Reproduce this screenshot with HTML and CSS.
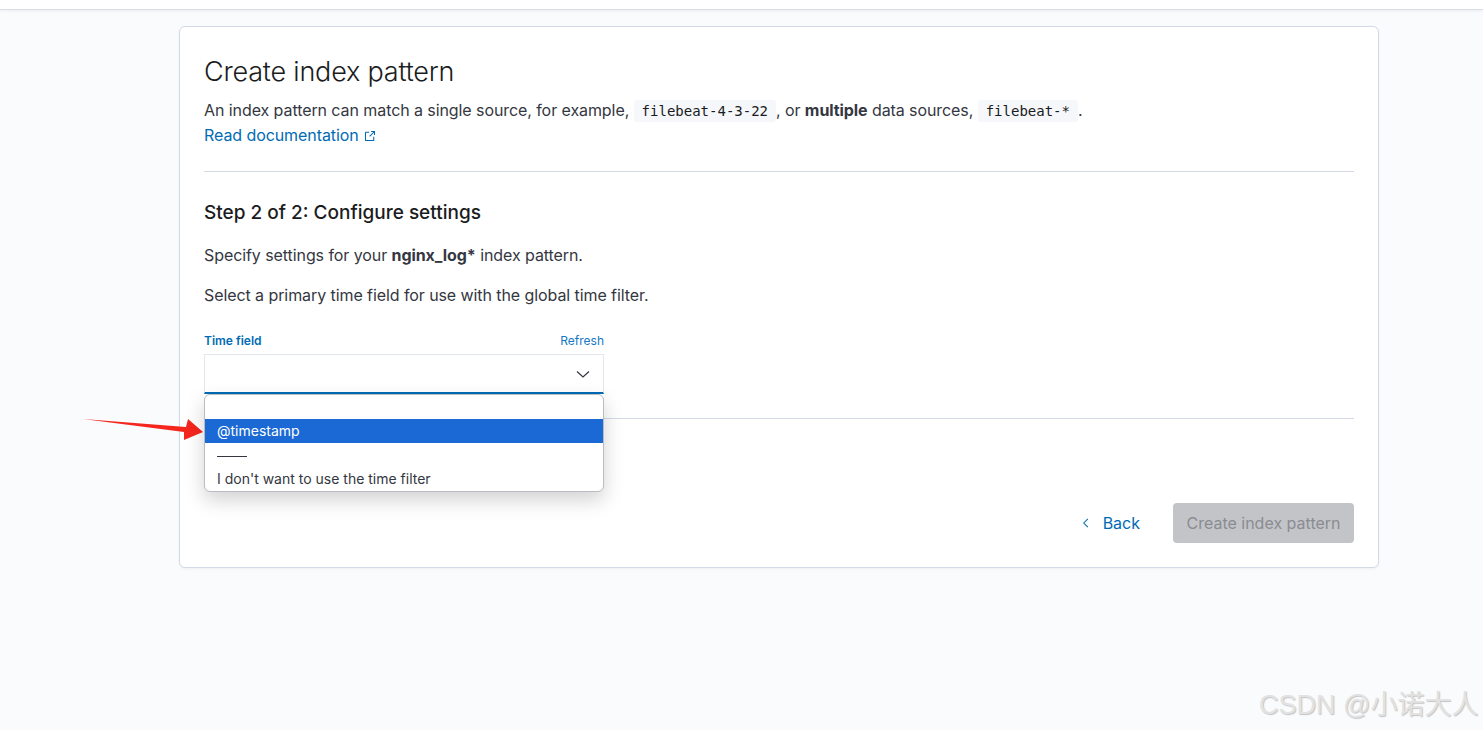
FILE: index.html
```html
<!DOCTYPE html>
<html lang="en">

<head>
  <meta charset="UTF-8" />
  <meta name="viewport" content="width=device-width, initial-scale=1.0" />
  <title>Create index pattern</title>
  <link rel="stylesheet" href="styles.css">
</head>

<body>
  <header class="topbar"></header>

  <main class="page">
    <section class="panel">
      <h1 class="title">Create index pattern</h1>
      <p class="intro">
        An index pattern can match a single source, for example, <code>filebeat-4-3-22</code>, or
        <strong>multiple</strong> data sources, <code>filebeat-*</code>.
      </p>
      <a class="doc-link" href="#">Read documentation
        <svg class="ext-icon" viewBox="0 0 16 16" width="12" height="12">
          <path d="M13 9v4.5a.5.5 0 0 1-.5.5h-10a.5.5 0 0 1-.5-.5v-10a.5.5 0 0 1 .5-.5H7M9.5 2H14v4.5M14 2L7.5 8.5"
            fill="none" stroke="currentColor" stroke-width="1.4" />
        </svg>
      </a>

      <hr class="rule" />

      <h2 class="step">Step 2 of 2: Configure settings</h2>
      <p class="text text-first">Specify settings for your <strong>nginx_log*</strong> index pattern.</p>
      <p class="text">Select a primary time field for use with the global time filter.</p>

      <div class="field">
        <div class="field-head">
          <label class="field-label">Time field</label>
          <a class="refresh" href="#">Refresh</a>
        </div>
        <div class="select">
          <svg class="chevron" viewBox="0 0 16 16" width="16" height="16">
            <path d="M2 5.5l6 5.5 6-5.5" fill="none" stroke="#343741" stroke-width="1.2" />
          </svg>
        </div>
        <ul class="options">
          <li class="option"></li>
          <li class="option active">@timestamp</li>
          <li class="option"><span class="sep"></span></li>
          <li class="option">I don't want to use the time filter</li>
        </ul>
      </div>

      <hr class="rule rule-bottom" />

      <div class="actions">
        <a class="back" href="#">
          <svg viewBox="0 0 16 16" width="12" height="12">
            <path d="M10.5 2.5L5 8l5.5 5.5" fill="none" stroke="currentColor" stroke-width="1.4" />
          </svg>
          Back
        </a>
        <button class="create" disabled>Create index pattern</button>
      </div>
    </section>
  </main>

  <svg class="arrow" viewBox="0 0 130 30" width="130" height="30">
    <polygon points="3,5 106,13 108,5 123,18 104,26 104,18" fill="#f5261d" />
  </svg>

  <div class="watermark">CSDN @小诺大人</div>
</body>

</html>
```

FILE: styles.css
```css
:root {
  --background: #fafbfd;
  --text: #343741;
  --heading: #1a1c21;
  --primary: #006bb4;
  --border: #d3dae6;
}

* {
  box-sizing: border-box;
}

body {
  margin: 0;
  font-family: "Inter", "Noto Sans", sans-serif;
  background: var(--background);
  color: var(--text);
  height: 730px;
  overflow: hidden;
}

a {
  text-decoration: none;
  color: var(--primary);
}

.topbar {
  height: 10px;
  background: #ffffff;
  border-bottom: 1px solid #d9dde6;
  box-shadow: 0 1px 3px rgba(0, 0, 0, 0.06);
}

.page {
  padding: 16px 0 0 179px;
}

.panel {
  width: 1200px;
  background: #ffffff;
  border: 1px solid var(--border);
  border-radius: 6px;
  box-shadow: 0 1px 3px rgba(0, 0, 0, 0.05);
  padding: 25px 24px 24px;
}

.title {
  margin: 0;
  font-size: 27px;
  line-height: 40px;
  font-weight: 300;
  color: var(--heading);
  letter-spacing: -0.2px;
}

.intro {
  margin: 6px 0 0;
  font-size: 16px;
  line-height: 24px;
  letter-spacing: -0.08px;
}

.intro code {
  font-family: "DejaVu Sans Mono", "Liberation Mono", monospace;
  font-size: 14px;
  letter-spacing: 0;
  background: #f5f7fa;
  color: var(--heading);
  padding: 3px 8px;
  border-radius: 3px;
}

.doc-link {
  display: inline-flex;
  align-items: center;
  gap: 5px;
  font-size: 16px;
  line-height: 24px;
  letter-spacing: -0.08px;
}

.ext-icon {
  margin-top: 2px;
}

.rule {
  border: none;
  border-top: 1px solid var(--border);
  margin: 24px 0;
}

.step {
  margin: 0;
  padding-top: 1px;
  font-size: 19px;
  line-height: 32px;
  font-weight: 500;
  color: var(--heading);
}

.text {
  margin: 16px 0 0;
  font-size: 16px;
  line-height: 24px;
  letter-spacing: -0.08px;
}

.text-first {
  margin-top: 14px;
}

.field {
  position: relative;
  width: 400px;
  margin-top: 25px;
}

.field-head {
  display: flex;
  justify-content: space-between;
  align-items: center;
  font-size: 12px;
  line-height: 18px;
  margin-bottom: 4px;
}

.field-label {
  font-weight: 600;
  color: var(--primary);
}

.refresh {
  color: #1578c2;
}

.select {
  height: 40px;
  background: #ffffff;
  border: 1px solid #e3e7ee;
  border-bottom: 2px solid var(--primary);
  display: flex;
  justify-content: flex-end;
  align-items: center;
  padding-right: 12px;
}

.options {
  position: absolute;
  z-index: 2;
  top: 62px;
  left: 0;
  width: 400px;
  margin: 0;
  padding: 0;
  list-style: none;
  background: #ffffff;
  border: 1px solid #b9bcc2;
  border-radius: 6px;
  box-shadow: 0 8px 20px rgba(0, 0, 0, 0.18);
  overflow: hidden;
}

.option {
  height: 24px;
  line-height: 24px;
  padding: 0 12px;
  font-size: 14px;
  color: var(--text);
}

.option.active {
  background: #1a69d4;
  color: #ffffff;
}

.sep {
  display: inline-block;
  width: 30px;
  border-top: 1px solid #343741;
  vertical-align: middle;
}

.rule-bottom {
  margin: 24px 0 84px;
}

.actions {
  display: flex;
  justify-content: flex-end;
  align-items: center;
  gap: 21px;
}

.back {
  display: flex;
  align-items: center;
  gap: 11px;
  font-size: 16px;
  padding: 0 12px;
}

.create {
  width: 181px;
  height: 40px;
  border: none;
  border-radius: 4px;
  background: #c3c4c8;
  color: #8a8c92;
  font-family: inherit;
  font-size: 16px;
}

.arrow {
  position: absolute;
  left: 80px;
  top: 414px;
}

.watermark {
  position: absolute;
  left: 1259px;
  top: 683px;
  font-family: "Liberation Sans", "Noto Sans CJK SC", sans-serif;
  font-size: 27px;
  color: #e2e2e2;
  text-shadow: 1px 1px 1px #c4c4c4;
}
```
